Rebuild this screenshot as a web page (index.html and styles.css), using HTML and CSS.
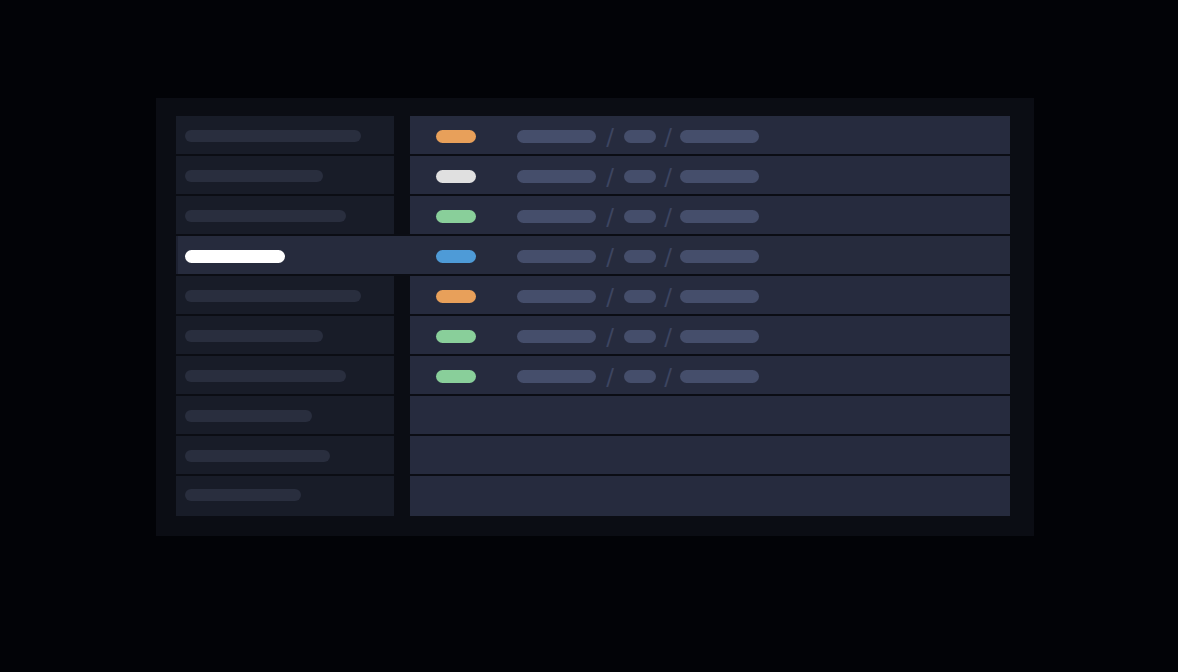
FILE: index.html
```html
<!DOCTYPE html>
<html lang="en">
<head>
<meta charset="utf-8">
<title>Routes</title>
<link rel="stylesheet" href="styles.css">
</head>
<body>
<div class="panel">
  <div class="rows">
    <div class="row">
      <div class="cell side"><span class="bar" style="width:176px"></span></div>
      <div class="cell main">
        <span class="badge orange"></span>
        <span class="seg long"></span><span class="sep first">/</span><span class="seg short"></span><span class="sep second">/</span><span class="seg long"></span>
      </div>
    </div>
    <div class="row">
      <div class="cell side"><span class="bar" style="width:138px"></span></div>
      <div class="cell main">
        <span class="badge white"></span>
        <span class="seg long"></span><span class="sep first">/</span><span class="seg short"></span><span class="sep second">/</span><span class="seg long"></span>
      </div>
    </div>
    <div class="row">
      <div class="cell side"><span class="bar" style="width:161px"></span></div>
      <div class="cell main">
        <span class="badge green"></span>
        <span class="seg long"></span><span class="sep first">/</span><span class="seg short"></span><span class="sep second">/</span><span class="seg long"></span>
      </div>
    </div>
    <div class="row active">
      <div class="cell side"><span class="bar current" style="width:100px"></span></div>
      <div class="cell main">
        <span class="badge blue"></span>
        <span class="seg long"></span><span class="sep first">/</span><span class="seg short"></span><span class="sep second">/</span><span class="seg long"></span>
      </div>
    </div>
    <div class="row">
      <div class="cell side"><span class="bar" style="width:176px"></span></div>
      <div class="cell main">
        <span class="badge orange"></span>
        <span class="seg long"></span><span class="sep first">/</span><span class="seg short"></span><span class="sep second">/</span><span class="seg long"></span>
      </div>
    </div>
    <div class="row">
      <div class="cell side"><span class="bar" style="width:138px"></span></div>
      <div class="cell main">
        <span class="badge green"></span>
        <span class="seg long"></span><span class="sep first">/</span><span class="seg short"></span><span class="sep second">/</span><span class="seg long"></span>
      </div>
    </div>
    <div class="row">
      <div class="cell side"><span class="bar" style="width:161px"></span></div>
      <div class="cell main">
        <span class="badge green"></span>
        <span class="seg long"></span><span class="sep first">/</span><span class="seg short"></span><span class="sep second">/</span><span class="seg long"></span>
      </div>
    </div>
    <div class="row">
      <div class="cell side"><span class="bar" style="width:127px"></span></div>
      <div class="cell main"></div>
    </div>
    <div class="row">
      <div class="cell side"><span class="bar" style="width:145px"></span></div>
      <div class="cell main"></div>
    </div>
    <div class="row last">
      <div class="cell side"><span class="bar" style="width:116px"></span></div>
      <div class="cell main"></div>
    </div>
  </div>
</div>
</body>
</html>
```
FILE: styles.css
```css
html, body {
  margin: 0;
  padding: 0;
  background: #020307;
  font-family: "DejaVu Sans", "Liberation Sans", sans-serif;
}

.panel {
  width: 878px;
  height: 438px;
  box-sizing: border-box;
  margin: 98px 0 0 156px;
  padding: 18px 24px 20px 20px;
  background: #0b0d14;
}

.rows {
  display: flex;
  flex-direction: column;
  gap: 2px;
}

.row {
  display: flex;
  gap: 16px;
  width: 834px;
  height: 38px;
  box-sizing: border-box;
}

.row.last {
  height: 40px;
}

.cell {
  display: flex;
  align-items: center;
  box-sizing: border-box;
  padding-top: 2px;
}

.row.last .cell {
  padding-top: 0;
  padding-bottom: 3px;
}

.side {
  width: 218px;
  padding-left: 9px;
  background: #181c28;
}

.main {
  width: 600px;
  padding-left: 26px;
  background: #262b3e;
}

/* selected row spans both columns */
.row.active {
  gap: 0;
  background: #262b3d;
  border-left: 2px solid #1d2131;
}

.row.active .side {
  width: 232px;
  padding-left: 7px;
  background: transparent;
}

.row.active .main {
  background: transparent;
}

.bar {
  display: block;
  height: 12px;
  border-radius: 6px;
  background: #292e3e;
}

.bar.current {
  height: 13px;
  border-radius: 7px;
  background: #ffffff;
}

.badge {
  display: block;
  width: 40px;
  height: 13px;
  border-radius: 7px;
  margin-right: 41px;
}

.badge.orange { background: #e8a05a; }
.badge.white  { background: #e0e0e0; }
.badge.green  { background: #89cf9a; }
.badge.blue   { background: #4e9bd7; }

.seg {
  display: block;
  height: 13px;
  border-radius: 7px;
  background: #454e6b;
}

.seg.long  { width: 79px; }
.seg.short { width: 32px; }

.sep {
  display: block;
  font-size: 23px;
  line-height: 23px;
  padding-top: 3px;
  color: #3d4561;
  text-align: center;
}

.sep.first  { width: 28px; }
.sep.second { width: 24px; }
```
